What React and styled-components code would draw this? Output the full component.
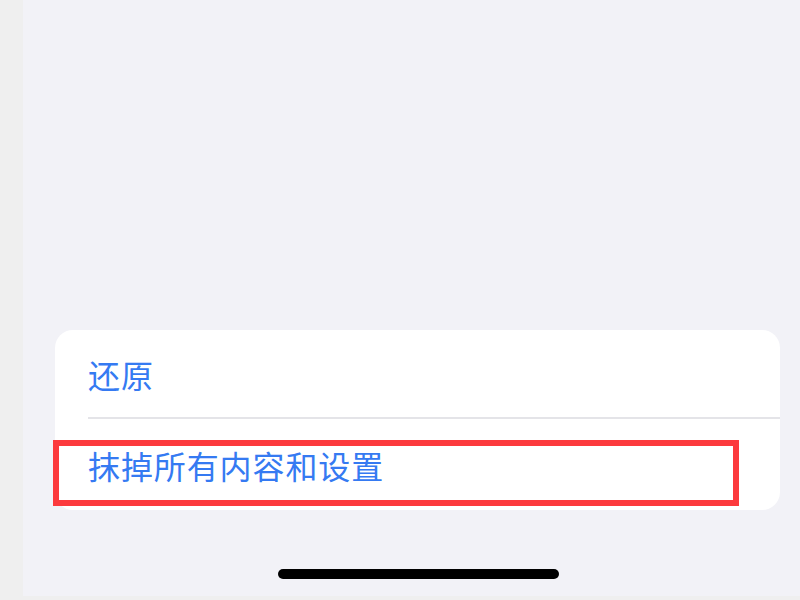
import styled, { createGlobalStyle } from 'styled-components';

const GlobalStyle = createGlobalStyle`
    html, body {
        margin: 0;
        padding: 0;
        background: #efefef;
    }
    body {
        font-family: "Noto Sans CJK SC", "Noto Sans", sans-serif;
    }
`;

const Page = styled.div`
    width: 800px;
    height: 600px;
    display: flex;
    flex-direction: column;
    background: #efefef;
    overflow: hidden;
`;

const Screen = styled.div`
    margin-left: 23px;
    height: 596px;
    background: #f2f2f7;
    display: flex;
    flex-direction: column;
`;

const Card = styled.div`
    position: relative;
    margin: 330px 20px 0 32px;
    background: #ffffff;
    border-radius: 18px;
    display: flex;
    flex-direction: column;
`;

const Row = styled.div`
    height: ${p => p.$h}px;
    padding-left: 33px;
    display: flex;
    align-items: center;
    font-size: 32px;
    color: #357af2;
    letter-spacing: 0.9px;
`;

const Divider = styled.div`
    margin-left: 33px;
    height: 2px;
    background: #e4e4e8;
`;

/* 标注用的红框 */
const Highlight = styled.div`
    position: absolute;
    left: -2px;
    top: 110px;
    width: 686px;
    height: 66px;
    box-sizing: border-box;
    border: 6px solid #fc3a3d;
    pointer-events: none;
`;

const HomeBar = styled.div`
    margin: 59px 0 0 255px;
    width: 281px;
    height: 10px;
    border-radius: 5px;
    background: #000;
`;

const App = () => {
    return (
        <Page>
            <GlobalStyle />
            <Screen>
                <Card>
                    <Row $h={87}>还原</Row>
                    <Divider />
                    <Row $h={91}>抹掉所有内容和设置</Row>
                    <Highlight />
                </Card>
                <HomeBar />
            </Screen>
        </Page>
    );
};

export default App;
